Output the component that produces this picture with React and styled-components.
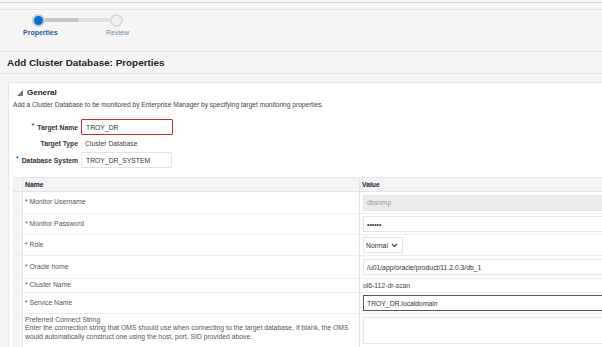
import React from "react";
import styled, { createGlobalStyle } from "styled-components";

const Global = createGlobalStyle`
  html, body { margin: 0; padding: 0; background: #f5f5f5; }
  body { font-family: "Liberation Sans", Arial, sans-serif; color: #333; overflow: hidden; }
  * { box-sizing: border-box; }
`;

const Page = styled.div`
  width: 602px;
  height: 347px;
  overflow: hidden;
  background: #f5f5f5;
  padding-top: 2px;
`;

const TopRule = styled.div`
  height: 8px;
  border-top: 1px solid #d6d6d6;
  border-bottom: 1px solid #e4e4e4;
`;

const Train = styled.div`
  height: 42px;
  border-bottom: 1px solid #e1e3e6;
  padding: 3px 0 0 23px;
  display: flex;
  flex-direction: column;
`;

const Track = styled.div`
  display: flex;
  align-items: center;
  height: 14px;
  padding-left: 9px;
`;

const Dot = styled.div`
  width: 13px;
  height: 13px;
  border-radius: 50%;
  flex: none;
  border: 2px solid ${p => (p.$active ? "#c9cbcf" : "#d8dadc")};
  background: ${p => (p.$active ? "#0572ce" : "#f0f0f0")};
`;

const Line = styled.div`
  width: 65px;
  height: 4px;
  background: linear-gradient(to right, #c8c8c8 0 50%, #dedede 50% 100%);
`;

const Labels = styled.div`
  display: flex;
  margin-top: 2px;
  font-size: 7px;
`;

const StepLabel = styled.div`
  width: ${p => p.$w}px;
  color: ${p => (p.$active ? "#1c5b99" : "#6f8aa6")};
  font-weight: ${p => (p.$active ? 600 : 400)};
`;

const TitleBar = styled.div`
  height: 22px;
  border-bottom: 1px solid #e1e3e6;
  display: flex;
  align-items: center;
  padding-left: 7px;
  font-size: 9.9px;
  font-weight: 700;
  color: #222;
`;

const Panel = styled.div`
  margin: 8px 0 0 8px;
  background: #fff;
  border: 1px solid #e6e6e6;
  border-right: none;
  height: 270px;
  padding: 5px 0 0 4px;
`;

const SectionHead = styled.div`
  display: flex;
  align-items: center;
  gap: 4px;
  padding-left: 4px;
  font-size: 8px;
  font-weight: 700;
  color: #222;
`;

const Desc = styled.div`
  font-size: 6.6px;
  color: #444;
  margin-top: 4px;
`;

const Form = styled.div`
  display: grid;
  grid-template-columns: 65px auto;
  column-gap: 3px;
  margin-top: 11px;
  align-items: center;
  justify-items: start;
`;

const Label = styled.div`
  justify-self: end;
  font-size: 6.8px;
  font-weight: 600;
  color: #333;
  height: ${p => p.$h || 16}px;
  display: flex;
  align-items: center;
  white-space: nowrap;
`;

const Star = styled.span`
  color: #0572ce;
  margin-right: 3px;
  font-size: 7px;
  position: relative;
  top: -2px;
`;

const Input = styled.div`
  width: ${p => p.$w || 92}px;
  height: 16px;
  border: 1px solid ${p => (p.$error ? "#d0262e" : "#e3e3e3")};
  background: #fff;
  color: #333;
  font-size: 6.8px;
  display: flex;
  align-items: center;
  padding-left: 4px;
  border-radius: 1px;
`;

const Plain = styled.div`
  font-size: 6.8px;
  color: #444;
  height: ${p => p.$h || 16}px;
  display: flex;
  align-items: center;
  padding-left: 4px;
`;

const Table = styled.div`
  margin-top: 9px;
  border-top: 1px solid #e4e5e8;
  display: grid;
  grid-template-columns: 9px 337px 1fr;
`;

const HeadCell = styled.div`
  background: #f3f4f6;
  height: 14px;
  border-bottom: 1px solid #e2e3e6;
  border-left: ${p => (p.$first ? "none" : "1px solid #e2e3e6")};
  font-size: 6.8px;
  font-weight: 700;
  color: #222;
  display: flex;
  align-items: center;
  padding-left: 2px;
`;

const Gutter = styled.div`
  background: #f3f4f6;
  border-bottom: 1px solid #eceef0;
  height: ${p => p.$h}px;
`;

const NameCell = styled.div`
  height: ${p => p.$h}px;
  border-left: 1px solid #e2e3e6;
  border-bottom: 1px solid #eceef0;
  font-size: 6.8px;
  color: #555;
  display: flex;
  flex-direction: column;
  justify-content: ${p => (p.$top ? "flex-start" : "center")};
  padding: ${p => (p.$top ? "2px 0 0 2px" : "0 0 0 2px")};
  line-height: 8.3px;
`;

const ValueCell = styled.div`
  height: ${p => p.$h}px;
  border-left: 1px solid #e2e3e6;
  border-bottom: 1px solid #eceef0;
  display: flex;
  align-items: ${p => (p.$top ? "flex-start" : "center")};
  padding: ${p => (p.$top ? "3px 0 0 3px" : "0 0 0 3px")};
`;

const Wide = styled.div`
  flex: 1;
  height: ${p => p.$h || 16}px;
  border: 1px solid ${p => (p.$dark ? "#555" : "#e6e6e6")};
  border-right: none;
  background: ${p => (p.$disabled ? "#ebebeb" : "#fff")};
  color: ${p => (p.$disabled ? "#999" : "#333")};
  font-size: 6.8px;
  display: flex;
  align-items: center;
  padding-left: 3px;
  border-radius: 1px 0 0 1px;
`;

const Select = styled.div`
  width: 40px;
  height: 16px;
  border: 1px solid #e3e3e3;
  font-size: 6.8px;
  color: #333;
  display: flex;
  align-items: center;
  justify-content: space-between;
  padding: 0 4px 0 2px;
  border-radius: 1px;
`;

const ValText = styled.div`
  font-size: 6.8px;
  color: #444;
`;

const rows = [
  { name: "Monitor Username", h: 22, v: <Wide $disabled>dbsnmp</Wide> },
  { name: "Monitor Password", h: 21, v: <Wide>&bull;&bull;&bull;&bull;&bull;&bull;</Wide> },
  {
    name: "Role",
    h: 21,
    v: (
      <Select>
        Normal
        <svg width="7" height="5" viewBox="0 0 7 5">
          <path d="M1 1 L3.5 3.5 L6 1" fill="none" stroke="#444" strokeWidth="1.2" />
        </svg>
      </Select>
    ),
  },
  { name: "Oracle home", h: 23, v: <Wide>/u01/app/oracle/product/11.2.0.3/db_1</Wide> },
  { name: "Cluster Name", h: 14, v: <ValText>ol6-112-dr-scan</ValText> },
  { name: "Service Name", h: 21, v: <Wide $dark>TROY_DR.localdomain</Wide> },
];

export default function App() {
  return (
    <Page>
      <Global />
      <TopRule />
      <Train>
        <Track>
          <Dot $active />
          <Line />
          <Dot />
        </Track>
        <Labels>
          <StepLabel $active $w={83}>Properties</StepLabel>
          <StepLabel>Review</StepLabel>
        </Labels>
      </Train>
      <TitleBar>Add Cluster Database: Properties</TitleBar>
      <Panel>
        <SectionHead>
          <svg width="6" height="6" viewBox="0 0 6 6">
            <path d="M6 0 L6 6 L0 6 Z" fill="#777" />
          </svg>
          General
        </SectionHead>
        <Desc>
          Add a Cluster Database to be monitored by Enterprise Manager by specifying target monitoring properties.
        </Desc>
        <Form>
          <Label><Star>*</Star>Target Name</Label>
          <Input $error>TROY_DR</Input>
          <Label $h={17}>Target Type</Label>
          <Plain $h={17}>Cluster Database</Plain>
          <Label><Star>*</Star>Database System</Label>
          <Input $w={91}>TROY_DR_SYSTEM</Input>
        </Form>
        <Table>
          <HeadCell $first />
          <HeadCell>Name</HeadCell>
          <HeadCell>Value</HeadCell>
          {rows.map(r => (
            <React.Fragment key={r.name}>
              <Gutter $h={r.h} />
              <NameCell $h={r.h}>
                <span>* {r.name}</span>
              </NameCell>
              <ValueCell $h={r.h}>{r.v}</ValueCell>
            </React.Fragment>
          ))}
          <Gutter $h={40} />
          <NameCell $h={40} $top>
            <span>Preferred Connect String</span>
            <span>
              Enter the connection string that OMS should use when connecting to the target database. If blank, the OMS
              would automatically construct one using the host, port, SID provided above.
            </span>
          </NameCell>
          <ValueCell $h={40} $top>
            <Wide $h={27} />
          </ValueCell>
        </Table>
      </Panel>
    </Page>
  );
}
